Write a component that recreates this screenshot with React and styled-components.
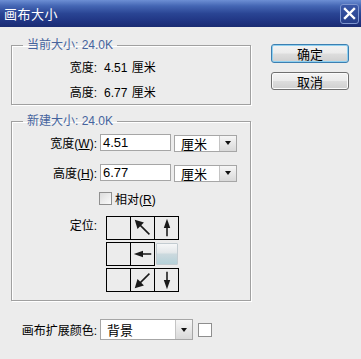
import React from 'react'
import styled, { createGlobalStyle } from 'styled-components'

const GlobalStyle = createGlobalStyle`
  body {
    margin: 0;
    background: #ececec;
  }
`

const Window = styled.div`
  width: 361px;
  height: 359px;
  background: #ececec;
  font-family: "Liberation Sans", "Noto Sans CJK SC", sans-serif;
  font-size: 12px;
  color: #000;
  overflow: hidden;
`

const TitleBar = styled.div`
  height: 27px;
  display: flex;
  align-items: center;
  justify-content: space-between;
  padding: 0 2px 0 4px;
  box-sizing: border-box;
  background: linear-gradient(#6d8fd4 0%, #4466b4 22%, #2a4594 50%, #1f3482 80%, #1a2c72 100%);
`

const Title = styled.span`
  color: #fff;
  font-size: 13px;
  letter-spacing: 0.5px;
`

const CloseButton = styled.div`
  width: 19px;
  height: 20px;
  box-sizing: border-box;
  border: 1px solid #7d95cf;
  border-radius: 3px;
  background: linear-gradient(#3a58a8, #253e8a);
  display: flex;
  align-items: center;
  justify-content: center;
`

const Body = styled.div`
  display: flex;
  padding: 11px 0 0 11px;
  gap: 20px;
`

const LeftColumn = styled.div`
  width: 240px;
  display: flex;
  flex-direction: column;
`

const Group = styled.fieldset`
  margin: ${p => p.$top || 0}px 0 0 0;
  padding: ${p => p.$pad};
  border: 1px solid #a0a0a0;
  box-shadow: 1px 1px 0 #fff, inset 1px 1px 0 #fff;
  min-width: 0;
  display: flex;
  flex-direction: column;
`

const Legend = styled.legend`
  margin-left: 11px;
  padding: 0 4px;
  line-height: 14px;
  color: #46649e;
`

const InfoRow = styled.div`
  display: flex;
  align-items: center;
  height: 25px;
`

const Label = styled.span`
  width: 85px;
  text-align: right;
  flex: none;
  white-space: nowrap;
`

const Value = styled.span`
  margin-left: 7px;
  word-spacing: 1px;
`

const FieldRow = styled.div`
  display: flex;
  align-items: center;
  gap: 3px;
  height: 17px;
  margin-top: ${p => p.$top || 0}px;
`

const TextInput = styled.div`
  width: 71px;
  height: 17px;
  box-sizing: border-box;
  border: 1px solid #a6a6a6;
  background: #fff;
  padding-left: 2px;
  line-height: 15px;
  font-size: 13px;
`

const Select = styled.div`
  width: ${p => p.$w}px;
  height: ${p => p.$h}px;
  box-sizing: border-box;
  border: 1px solid #a6a6a6;
  background: #fff;
  display: flex;
  margin-top: ${p => p.$dy || 0}px;
`

const SelectText = styled.span`
  flex: 1;
  padding-left: ${p => p.$pl}px;
  display: flex;
  align-items: center;
  font-size: 13px;
`

const DropButton = styled.span`
  width: 16px;
  border-left: 1px solid #c4c4c4;
  background: linear-gradient(#f6f6f6, #d9d9d9);
  display: flex;
  align-items: center;
  justify-content: center;
  &::after {
    content: '';
    border-left: 3px solid transparent;
    border-right: 3px solid transparent;
    border-top: 4px solid #111;
  }
`

const CheckRow = styled.div`
  display: flex;
  align-items: center;
  margin-top: 11px;
  height: 13px;
  padding-left: 87px;
  gap: 3px;
`

const CheckBox = styled.span`
  width: 13px;
  height: 13px;
  box-sizing: border-box;
  border: 1px solid #8f8f8f;
  background: linear-gradient(135deg, #dcdcdc, #fbfbfb);
`

const AnchorRow = styled.div`
  display: flex;
  align-items: flex-start;
  margin-top: 11px;
`

const AnchorLabel = styled(Label)`
  line-height: 14px;
  padding-top: 3px;
`

const AnchorGrid = styled.div`
  margin-left: 9px;
  display: flex;
  flex-direction: column;
  gap: 2px;
`

const CellRow = styled.div`
  display: flex;
`

const Cell = styled.div`
  width: 24px;
  height: 24px;
  box-sizing: border-box;
  border: 1px solid #000;
  display: flex;
  align-items: center;
  justify-content: center;
  & + & {
    border-left: none;
    width: 24px;
  }
  &:first-child {
    width: 25px;
  }
`

const ActiveCell = styled.div`
  width: 22px;
  height: 22px;
  margin: 1px 0 0 1px;
  box-sizing: border-box;
  border: 1px solid #c3ccd1;
  border-radius: 1px;
  background: linear-gradient(#f6f7f8 0%, #e4e8ea 42%, #cbd9de 52%, #b5d1d9 100%);
`

const ColorRow = styled.div`
  display: flex;
  align-items: center;
  margin-top: 18px;
  padding-left: 1px;
  gap: 3px;
`

const Swatch = styled.span`
  width: 14px;
  height: 14px;
  box-sizing: border-box;
  border: 1px solid #8e8e8e;
  background: #fff;
  margin-left: 2px;
`

const RightColumn = styled.div`
  display: flex;
  flex-direction: column;
  gap: 9px;
  margin-top: 6px;
`

const Button = styled.div`
  width: 78px;
  height: ${p => (p.$default ? 19 : 18)}px;
  box-sizing: border-box;
  border: 1px solid ${p => (p.$default ? '#3c7fb1' : '#707070')};
  box-shadow: ${p => (p.$default ? 'inset 0 0 0 1px #8fd0f0' : 'inset 0 0 0 1px #fbfbfb')};
  border-radius: 3px;
  background: linear-gradient(#f3f3f3 0%, #ebebeb 48%, #dddddd 52%, #cfcfcf 100%);
  display: flex;
  align-items: center;
  justify-content: center;
  font-size: 13px;
`

const arrows = {
  nw: { line: [19, 19, 8, 8], head: '3,3 13,6 6,13' },
  n: { line: [12, 21, 12, 9], head: '12,2 15.5,12 8.5,12' },
  w: { line: [21, 12, 9, 12], head: '2,12 12,8.5 12,15.5' },
  sw: { line: [19, 5, 8, 16], head: '3,21 6,11 13,18' },
  s: { line: [12, 3, 12, 15], head: '12,22 8.5,12 15.5,12' },
}

function Arrow({ dir }) {
  const a = arrows[dir]
  return (
    <svg width="22" height="22" viewBox="0 0 24 24">
      <line x1={a.line[0]} y1={a.line[1]} x2={a.line[2]} y2={a.line[3]} stroke="#1a1a1a" strokeWidth="1.7" />
      <polygon points={a.head} fill="#1a1a1a" />
    </svg>
  )
}

export default function App() {
  return (
    <Window>
      <GlobalStyle />
      <TitleBar>
        <Title>画布大小</Title>
        <CloseButton>
          <svg width="13" height="13" viewBox="0 0 13 13">
            <path d="M2 2 L11 11 M11 2 L2 11" stroke="#fff" strokeWidth="2.4" strokeLinecap="square" />
          </svg>
        </CloseButton>
      </TitleBar>
      <Body>
        <LeftColumn>
          <Group $pad="2px 0 0 0">
            <Legend>当前大小: 24.0K</Legend>
            <InfoRow>
              <Label>宽度:</Label>
              <Value>4.51 厘米</Value>
            </InfoRow>
            <InfoRow>
              <Label>高度:</Label>
              <Value>6.77 厘米</Value>
            </InfoRow>
          </Group>
          <Group $top={9} $pad="6px 0 8px 0">
            <Legend>新建大小: 24.0K</Legend>
            <FieldRow>
              <Label>宽度(<u>W</u>):</Label>
              <TextInput>4.51</TextInput>
              <Select $w={63} $h={17} $dy={1}>
                <SelectText $pl={6}>厘米</SelectText>
                <DropButton />
              </Select>
            </FieldRow>
            <FieldRow $top={13}>
              <Label>高度(<u>H</u>):</Label>
              <TextInput>6.77</TextInput>
              <Select $w={63} $h={17} $dy={1}>
                <SelectText $pl={6}>厘米</SelectText>
                <DropButton />
              </Select>
            </FieldRow>
            <CheckRow>
              <CheckBox />
              <span>相对(<u>R</u>)</span>
            </CheckRow>
            <AnchorRow>
              <AnchorLabel>定位:</AnchorLabel>
              <AnchorGrid>
                <CellRow>
                  <Cell />
                  <Cell><Arrow dir="nw" /></Cell>
                  <Cell><Arrow dir="n" /></Cell>
                </CellRow>
                <CellRow>
                  <Cell />
                  <Cell><Arrow dir="w" /></Cell>
                  <ActiveCell />
                </CellRow>
                <CellRow>
                  <Cell />
                  <Cell><Arrow dir="sw" /></Cell>
                  <Cell><Arrow dir="s" /></Cell>
                </CellRow>
              </AnchorGrid>
            </AnchorRow>
          </Group>
          <ColorRow>
            <Label>画布扩展颜色:</Label>
            <Select $w={93} $h={21}>
              <SelectText $pl={6}>背景</SelectText>
              <DropButton />
            </Select>
            <Swatch />
          </ColorRow>
        </LeftColumn>
        <RightColumn>
          <Button $default>确定</Button>
          <Button>取消</Button>
        </RightColumn>
      </Body>
    </Window>
  )
}
